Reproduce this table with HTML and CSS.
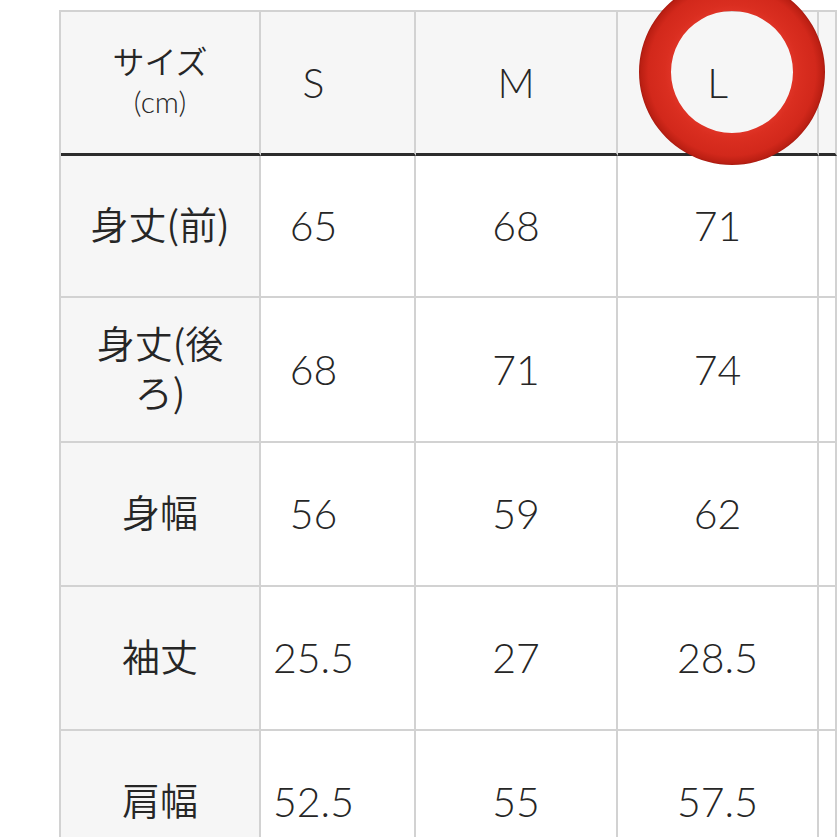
FILE: index.html
```html
<!DOCTYPE html>
<html lang="ja">
<head>
<meta charset="utf-8">
<title>サイズ表</title>
<link rel="stylesheet" href="styles.css">
</head>
<body>
<div class="page">
  <div class="size-table">
    <div class="cell head label"><span class="jp-sm">サイズ</span><span class="unit">(cm)</span></div>
    <div class="cell head s">S</div>
    <div class="cell head">M</div>
    <div class="cell head">L</div>
    <div class="cell head edge"></div>

    <div class="cell label">身丈(前)</div>
    <div class="cell s">65</div>
    <div class="cell">68</div>
    <div class="cell">71</div>
    <div class="cell edge"></div>

    <div class="cell label">身丈(後ろ)</div>
    <div class="cell s">68</div>
    <div class="cell">71</div>
    <div class="cell">74</div>
    <div class="cell edge"></div>

    <div class="cell label">身幅</div>
    <div class="cell s">56</div>
    <div class="cell">59</div>
    <div class="cell">62</div>
    <div class="cell edge"></div>

    <div class="cell label">袖丈</div>
    <div class="cell s">25.5</div>
    <div class="cell">27</div>
    <div class="cell">28.5</div>
    <div class="cell edge"></div>

    <div class="cell label">肩幅</div>
    <div class="cell s">52.5</div>
    <div class="cell">55</div>
    <div class="cell">57.5</div>
    <div class="cell edge"></div>
  </div>

  <svg class="ring" width="186" height="186" viewBox="0 0 186 186">
    <defs>
      <radialGradient id="rg" cx="93" cy="93" r="93" gradientUnits="userSpaceOnUse">
        <stop offset="0.64" stop-color="#e03427"/>
        <stop offset="0.72" stop-color="#da2e20"/>
        <stop offset="0.9" stop-color="#d2281b"/>
        <stop offset="0.98" stop-color="#bb1f13"/>
        <stop offset="1" stop-color="#a81a10"/>
      </radialGradient>
    </defs>
    <path fill="url(#rg)" fill-rule="evenodd" d="M93 0a93 93 0 1 0 0.001 0Z M93 32a61 61 0 1 1 -0.001 0Z"/>
  </svg>
</div>
</body>
</html>
```

FILE: styles.css
```css
html, body {
  margin: 0;
  padding: 0;
  background: #ffffff;
}

.page {
  position: relative;
  width: 837px;
  height: 837px;
  overflow: hidden;
}

.size-table {
  display: grid;
  grid-template-columns: 200px 155px 202px 201px 18px;
  grid-template-rows: 144px 142px 145px 144px 144px 144px;
  width: max-content;
  margin: 10px 0 0 59px;
  border-top: 2px solid #d2d2d2;
  border-left: 2px solid #d2d2d2;
  font-family: "Lato", "Noto Sans CJK JP", sans-serif;
  color: #262626;
}

.cell {
  box-sizing: border-box;
  display: flex;
  flex-direction: column;
  align-items: center;
  justify-content: center;
  text-align: center;
  border-right: 2px solid #d2d2d2;
  border-bottom: 2px solid #d2d2d2;
  background: #ffffff;
  font-size: 41px;
  font-weight: 300;
  line-height: 1.2;
}

.cell.s {
  padding-right: 48px;
}

.cell.head {
  background: #f6f6f6;
  border-bottom: 3px solid #2c2c2c;
}

.cell.label {
  background: #f6f6f6;
  font-family: "Noto Sans CJK JP DemiLight", "Noto Sans CJK JP", sans-serif;
  font-weight: 300;
  font-size: 38px;
  line-height: 49px;
  padding: 0 18px 8px;
}

.cell.head.label {
  line-height: 1;
  padding-bottom: 6px;
}

.jp-sm {
  font-size: 32px;
  line-height: 42px;
}

.unit {
  font-family: "Lato", sans-serif;
  font-weight: 300;
  font-size: 30px;
  line-height: 40px;
}

.cell.edge {
  background: #ffffff;
}

.cell.head.edge {
  background: #f6f6f6;
}

.ring {
  position: absolute;
  left: 639px;
  top: -21px;
}
```
